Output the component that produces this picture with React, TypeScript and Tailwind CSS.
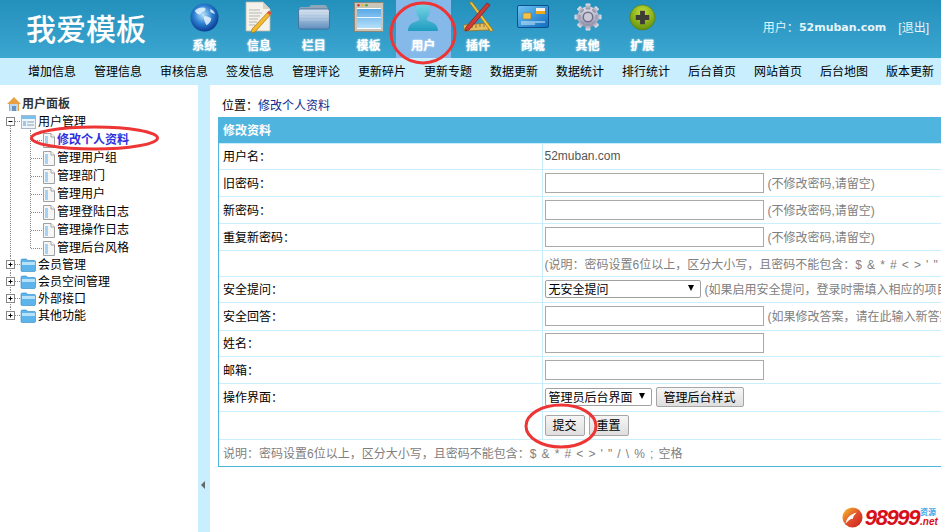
import React from 'react'

const navLinks = ['增加信息', '管理信息', '审核信息', '签发信息', '管理评论', '更新碎片', '更新专题', '数据更新', '数据统计', '排行统计', '后台首页', '网站首页', '后台地图', '版本更新']

function GlobeIcon() {
  return (
    <svg width="29" height="29" viewBox="0 0 30 30">
      <defs>
        <radialGradient id="globe" cx="45%" cy="40%" r="60%">
          <stop offset="0%" stopColor="#b8e2fa" />
          <stop offset="55%" stopColor="#2a7fd0" />
          <stop offset="100%" stopColor="#0b3c94" />
        </radialGradient>
      </defs>
      <circle cx="15" cy="15" r="14.5" fill="url(#globe)" />
      <path d="M5 8c3-3 7-4 10-3 2 1 1 3-1 4-2 0-2 2-4 3-2 0-4-2-5-4zM14 14c3-1 6 0 8 2 0 3-3 6-5 7-1-2-3-6-3-9zM21 6c2 1 4 3 5 5-2 0-4-1-5-2z" fill="#e8f5fd" opacity="0.85" />
    </svg>
  )
}

function NoteIcon() {
  return (
    <svg width="30" height="32" viewBox="0 0 30 32">
      <path d="M2 1h17l7 7v22H2z" fill="#f4f2ea" stroke="#b9b6aa" strokeWidth="0.8" />
      <path d="M19 1v7h7z" fill="#d6d3c6" />
      <path d="M5 9h11M5 12h13M5 15h11M5 18h9M5 21h8M5 24h6" stroke="#b5b5b0" strokeWidth="1" />
      <path d="M25 10l3 2L11 31l-4 1 1-4z" fill="#f2b92c" stroke="#a6701a" strokeWidth="0.7" />
      <path d="M25 10l3 2-2 2-3-2z" fill="#d8504a" />
    </svg>
  )
}

function FolderIcon() {
  return (
    <svg width="32" height="26" viewBox="0 0 32 26">
      <defs>
        <linearGradient id="fold" x1="0" y1="0" x2="0" y2="1">
          <stop offset="0%" stopColor="#d8e4f0" />
          <stop offset="100%" stopColor="#5f8fbe" />
        </linearGradient>
      </defs>
      <path d="M1 5c0-1 1-2 2-2h8l2-2h14c1 0 2 1 2 2l2 3H1z" fill="#8fa6ba" />
      <rect x="0.5" y="5" width="31" height="20" rx="2" fill="url(#fold)" stroke="#3f6a94" strokeWidth="0.8" />
      <path d="M2 10h28M2 13h28M2 16h28" stroke="#ffffff" strokeOpacity="0.25" />
    </svg>
  )
}

function WindowIcon() {
  return (
    <svg width="30" height="30" viewBox="0 0 30 30">
      <defs>
        <linearGradient id="win" x1="0" y1="0" x2="0" y2="1">
          <stop offset="0%" stopColor="#5aa9e6" />
          <stop offset="100%" stopColor="#b4e0fb" />
        </linearGradient>
      </defs>
      <rect x="0.5" y="0.5" width="29" height="29" fill="#c9c5b8" stroke="#8c8778" />
      <rect x="3" y="6" width="24" height="21" fill="#fff" />
      <rect x="3" y="7" width="24" height="19" fill="url(#win)" />
      <rect x="3" y="15" width="24" height="1" fill="#eaf6ff" />
      <circle cx="4.5" cy="3.3" r="1.3" fill="#d8352a" />
      <circle cx="8.5" cy="3.3" r="1.3" fill="#e8b820" />
      <circle cx="12.5" cy="3.3" r="1.3" fill="#4aa838" />
    </svg>
  )
}

function UserIcon() {
  return (
    <svg width="32" height="30" viewBox="0 0 32 30">
      <defs>
        <linearGradient id="usr" x1="0" y1="0" x2="0" y2="1">
          <stop offset="0%" stopColor="#7fd8e8" />
          <stop offset="100%" stopColor="#1f9cc0" />
        </linearGradient>
      </defs>
      <path d="M16 0c5 0 7 4 7 8 0 3-1 6-3 8-1 2 1 3 4 4 4 1 7 4 7 9H1c0-5 3-8 7-9 3-1 5-2 4-4-2-2-3-5-3-8 0-4 2-8 7-8z" fill="url(#usr)" />
    </svg>
  )
}

function ToolsIcon() {
  return (
    <svg width="32" height="32" viewBox="0 0 32 32">
      <path d="M1 24L27 22v7L3 30z" fill="#e2bd62" stroke="#8f6d20" strokeWidth="0.7" />
      <path d="M6 24v3M10 24v3M14 24v3M18 23v3M22 23v3" stroke="#7d5d1a" strokeWidth="0.8" />
      <path d="M7 1l3 0 21 28-2 2z" fill="#f2c53a" stroke="#8f6d20" strokeWidth="0.7" />
      <path d="M25 2l3 2L7 29l-4 1 1-4z" fill="#cf3b34" stroke="#7c1d18" strokeWidth="0.7" />
    </svg>
  )
}

function CardIcon() {
  return (
    <svg width="32" height="24" viewBox="0 0 32 24">
      <defs>
        <linearGradient id="card" x1="0" y1="0" x2="1" y2="1">
          <stop offset="0%" stopColor="#6cc4f2" />
          <stop offset="100%" stopColor="#0f6cc0" />
        </linearGradient>
      </defs>
      <rect x="0.5" y="0.5" width="31" height="22" rx="1.5" fill="url(#card)" stroke="#0b4f90" />
      <rect x="19" y="3" width="9" height="3" fill="#f2f2f2" />
      <rect x="19" y="6" width="9" height="3" fill="#f0a818" />
      <rect x="6" y="8" width="8" height="6" rx="1" fill="#f3c24a" stroke="#b07a12" strokeWidth="0.6" />
      <path d="M4 17h24M4 19h14" stroke="#d6effc" strokeWidth="1" />
    </svg>
  )
}

function GearIcon() {
  return (
    <svg width="28" height="30" viewBox="0 0 28 28">
      <defs>
        <linearGradient id="gear" x1="0" y1="0" x2="0" y2="1">
          <stop offset="0%" stopColor="#e4e4ea" />
          <stop offset="100%" stopColor="#8c8ca8" />
        </linearGradient>
      </defs>
      <g fill="url(#gear)">
        <circle cx="14" cy="14" r="10.5" />
        {[0, 45, 90, 135, 180, 225, 270, 315].map((deg) => (
          <rect key={deg} x="11.5" y="0.5" width="5" height="6" rx="1" transform={`rotate(${deg} 14 14)`} />
        ))}
      </g>
      <circle cx="14" cy="14" r="5.5" fill="#70708c" />
      <circle cx="14" cy="14" r="4" fill="#c9c9d8" />
    </svg>
  )
}

function PlusIcon() {
  return (
    <svg width="27" height="27" viewBox="0 0 28 28">
      <defs>
        <radialGradient id="plus" cx="50%" cy="30%" r="75%">
          <stop offset="0%" stopColor="#c6e23a" />
          <stop offset="100%" stopColor="#5d8a06" />
        </radialGradient>
      </defs>
      <circle cx="14" cy="14" r="13" fill="url(#plus)" stroke="#4f7a08" strokeWidth="0.6" />
      <path d="M11.5 7h5v4.5H21v5h-4.5V21h-5v-4.5H7v-5h4.5z" fill="#3d3d36" />
    </svg>
  )
}

const mainNav = [
  { label: '系统', icon: <GlobeIcon /> },
  { label: '信息', icon: <NoteIcon /> },
  { label: '栏目', icon: <FolderIcon /> },
  { label: '模板', icon: <WindowIcon /> },
  { label: '用户', icon: <UserIcon />, active: true },
  { label: '插件', icon: <ToolsIcon /> },
  { label: '商城', icon: <CardIcon /> },
  { label: '其他', icon: <GearIcon /> },
  { label: '扩展', icon: <PlusIcon /> },
]

function PageGlyph() {
  return (
    <g>
      <path d="M43.500 2.500h7.500l3.500 3.500v10.500h-11z" fill="#f6f6f6" stroke="#a0a0a0" />
      <path d="M51 2.500v3.500h3.500" fill="#fff" stroke="#a0a0a0" />
      <rect x="45" y="5" width="3" height="10" fill="#a4d2f2" />
    </g>
  )
}

function TreeLeaf({ label, last, current }: { label: string; last?: boolean; current?: boolean }) {
  return (
    <div className={`flex items-center ${last ? 'h-[17px]' : 'h-[18px]'}`}>
      <svg width="57" height="18" className="shrink-0">
        <path d="M10.5 0V18" stroke="#888" strokeDasharray="1 1" />
        <path d={last ? 'M30.5 0V9' : 'M30.5 0V18'} stroke="#888" strokeDasharray="1 1" />
        <path d="M31 9.5H43" stroke="#888" strokeDasharray="1 1" />
        <PageGlyph />
      </svg>
      <span className={current ? 'font-bold text-[#3030e0]' : 'text-black'}>{label}</span>
    </div>
  )
}

function TreeFolder({ label, last }: { label: string; last?: boolean }) {
  return (
    <div className="flex h-[17px] items-center">
      <svg width="38" height="17" className="shrink-0">
        <path d={last ? 'M10.5 0V8' : 'M10.5 0V17'} stroke="#888" strokeDasharray="1 1" />
        <path d="M15 8.5H21" stroke="#888" strokeDasharray="1 1" />
        <rect x="6.5" y="4.5" width="8" height="8" fill="#fff" stroke="#888" />
        <path d="M8.5 8.5h4M10.5 6.5v4" stroke="#000" />
        <path d="M21 4.5c0-1 .5-1.500 1.500-1.500h4l1 1.500h7c.5 0 1 .5 1 1v9c0 .5-.5 1-1 1H22c-.5 0-1-.5-1-1z" fill="#5cb4ea" stroke="#2d86c4" strokeWidth="0.6" />
        <rect x="22" y="6" width="13" height="3" fill="#b8e2fa" />
      </svg>
      <span>{label}</span>
    </div>
  )
}

function Sidebar() {
  return (
    <aside className="w-[198px] shrink-0 bg-white pt-[10px] text-[12px] leading-none">
      <div className="flex h-[18px] items-center pl-[6px]">
        <svg width="16" height="16" viewBox="0 0 16 16" className="shrink-0">
          <path d="M1 8l7-7 7 7-2 0v7H3V8z" fill="#e8a040" />
          <rect x="4" y="8" width="8" height="7" fill="#bcd8f0" />
          <rect x="6" y="10" width="4" height="5" fill="#6a94c0" />
        </svg>
        <span className="font-bold text-[#333]">用户面板</span>
      </div>
      <div className="flex h-[18px] items-center">
        <svg width="38" height="18" className="shrink-0">
          <path d="M10.5 13V18" stroke="#888" strokeDasharray="1 1" />
          <path d="M15 8.500H21" stroke="#888" strokeDasharray="1 1" />
          <path d="M30.500 15V18" stroke="#888" strokeDasharray="1 1" />
          <rect x="6.5" y="4.5" width="8" height="8" fill="#fff" stroke="#888" />
          <path d="M8.5 8.5h4" stroke="#000" />
          <rect x="21.500" y="2.500" width="14" height="13" fill="#eef5fb" stroke="#a8b8c8" />
          <rect x="22" y="3" width="13" height="3" fill="#7cc0ee" />
          <path d="M27 9h7M27 12h7" stroke="#8aa0b4" />
          <rect x="23" y="8" width="3" height="5" fill="#9cc8ec" />
        </svg>
        <span>用户管理</span>
      </div>
      <TreeLeaf label="修改个人资料" current />
      <TreeLeaf label="管理用户组" />
      <TreeLeaf label="管理部门" />
      <TreeLeaf label="管理用户" />
      <TreeLeaf label="管理登陆日志" />
      <TreeLeaf label="管理操作日志" />
      <TreeLeaf label="管理后台风格" last />
      <TreeFolder label="会员管理" />
      <TreeFolder label="会员空间管理" />
      <TreeFolder label="外部接口" />
      <TreeFolder label="其他功能" last />
    </aside>
  )
}

function TextInput() {
  return <input type="text" className="h-[20px] w-[219px] shrink-0 border border-[#a9a9a9] bg-white" />
}

function Hint({ children }: { children: React.ReactNode }) {
  return <span className="pt-[2px]">{children}</span>
}

function FakeSelect({ label, width }: { label: string; width: string }) {
  return (
    <div className={`relative flex h-[18px] shrink-0 items-center rounded-[2px] border border-[#a0a0a0] bg-white pl-[3px] pt-[1px] text-[12px] text-black ${width}`}>
      {label}
      <span className="absolute right-[6px] top-[4px] h-0 w-0 border-x-[3.5px] border-t-[6px] border-x-transparent border-t-black" />
    </div>
  )
}

function Btn({ label, className }: { label: string; className: string }) {
  return (
    <button type="button" className={`shrink-0 rounded-[2px] border border-[#a6a6a6] bg-gradient-to-b from-[#f6f6f6] to-[#dedede] pt-[1px] text-[12px] text-black ${className}`}>
      {label}
    </button>
  )
}

function RuleText() {
  return (
    <>
      <span className="tracking-[0.9px]">{"$ & * # < > ' \" / \\ % ; "}</span>空格
    </>
  )
}

function Row({ label, height, children }: { label?: string; height: string; children: React.ReactNode }) {
  return (
    <tr className={height}>
      <td className="border border-l-0 border-[#c9efff] pl-[4px] pt-[2px] text-black">{label}</td>
      <td className="border border-r-0 border-[#c9efff] pl-[2px]">
        <div className="flex items-center gap-[4px] whitespace-nowrap text-[#808080]">{children}</div>
      </td>
    </tr>
  )
}

function FormTable() {
  return (
    <div className="mt-[4px] w-[1000px] border border-[#4fb4de] text-[12px] leading-none">
      <table className="w-full table-fixed border-collapse">
        <colgroup>
          <col className="w-[323px]" />
          <col />
        </colgroup>
        <tbody>
          <tr className="h-[25px]">
            <td colSpan={2} className="bg-[#4fb4de] pl-[4px] pt-[2px] font-bold text-white">修改资料</td>
          </tr>
          <Row label="用户名：" height="h-[26px]"><span className="text-[#555]">52muban.com</span></Row>
          <Row label="旧密码：" height="h-[27px]"><TextInput /><Hint>(不修改密码,请留空)</Hint></Row>
          <Row label="新密码：" height="h-[27px]"><TextInput /><Hint>(不修改密码,请留空)</Hint></Row>
          <Row label="重复新密码：" height="h-[27px]"><TextInput /><Hint>(不修改密码,请留空)</Hint></Row>
          <Row height="h-[26px]">
            <span className="pt-[3px]">(说明：密码设置6位以上，区分大小写，且密码不能包含：<RuleText />)</span>
          </Row>
          <Row label="安全提问：" height="h-[26px]">
            <FakeSelect label="无安全提问" width="w-[156px]" />
            <Hint>(如果启用安全提问，登录时需填入相应的项目才能登录)</Hint>
          </Row>
          <Row label="安全回答：" height="h-[28px]"><TextInput /><Hint>(如果修改答案，请在此输入新答案)</Hint></Row>
          <Row label="姓名：" height="h-[26px]"><TextInput /></Row>
          <Row label="邮箱：" height="h-[27px]"><TextInput /></Row>
          <Row label="操作界面：" height="h-[28px]">
            <FakeSelect label="管理员后台界面" width="w-[107px]" />
            <Btn label="管理后台样式" className="h-[20px] w-[88px]" />
          </Row>
          <Row height="h-[28px]">
            <Btn label="提交" className="mt-[1px] h-[21px] w-[40px]" />
            <Btn label="重置" className="mt-[1px] h-[21px] w-[40px]" />
          </Row>
          <tr className="h-[27px]">
            <td colSpan={2} className="whitespace-nowrap pl-[4px] pt-[3px] text-[#808080]">
              说明：密码设置6位以上，区分大小写，且密码不能包含：<RuleText />
            </td>
          </tr>
        </tbody>
      </table>
    </div>
  )
}

export default function App() {
  return (
    <div className="relative flex h-[532px] w-[941px] flex-col overflow-hidden bg-white font-['Liberation_Sans','Noto_Sans_CJK_SC',sans-serif]">
      <header className="flex h-[58px] shrink-0 bg-gradient-to-b from-[#2390bc] to-[#3ba6d0]">
        <div className="w-[177px] shrink-0 pl-[26px] pt-[12px] text-[30px] font-medium leading-[36px] text-white">我爱模板</div>
        <nav className="flex">
          {mainNav.map((item) => (
            <div
              key={item.label}
              className={`flex w-[54.75px] flex-col items-center text-[12px] font-bold text-white ${item.active ? 'bg-[#85b9e9]' : ''}`}
            >
              <div className="flex h-[34px] items-center justify-center">{item.icon}</div>
              <span className="mt-[5px] leading-[14px] [text-shadow:0_0_2px_#ffffff]">{item.label}</span>
            </div>
          ))}
        </nav>
        <div className="ml-auto flex items-start whitespace-nowrap pr-[12px] pt-[21px] text-[12px] leading-[14px] text-[#e6f4fa]">
          用户：<span className="font-['DejaVu_Sans'] text-[11px] font-bold">52muban.com</span>
          <span className="ml-[12px]">[退出]</span>
        </div>
      </header>

      <div className="flex h-[27px] shrink-0 items-center bg-[#c9efff] pl-[28px] text-[12px] text-black">
        {navLinks.map((link) => (
          <span key={link} className="w-[66px] shrink-0">{link}</span>
        ))}
      </div>

      <div className="flex min-h-0 flex-1">
        <Sidebar />
        <div className="flex w-[12px] shrink-0 items-center justify-center bg-[#c9efff] pt-[352px] pr-[3px]">
          <span className="h-0 w-0 border-y-[4px] border-r-[4px] border-y-transparent border-r-[#666]" />
        </div>
        <main className="min-w-0 flex-1 pl-[8px] pt-[12px] text-[12px]">
          <div className="pl-[4px] pt-[1px] leading-[16px] text-black">
            位置：<span className="text-[#0a2a8c]">修改个人资料</span>
          </div>
          <div className="-mt-[1px]">
            <FormTable />
          </div>
        </main>
      </div>

      {/* hand-drawn red annotations over the page */}
      <svg className="pointer-events-none absolute left-0 top-0" width="941" height="532">
        <g fill="none" stroke="#ee3535" strokeWidth="3">
          <ellipse cx="423" cy="33" rx="32" ry="30" />
          <ellipse cx="94.500" cy="138" rx="63" ry="11" />
          <ellipse cx="561" cy="426" rx="35" ry="21" />
        </g>
      </svg>

      {/* watermark logo */}
      <div className="absolute bottom-[3px] right-[4px] flex items-center bg-white">
        <svg width="21" height="23" viewBox="0 0 23 23" className="shrink-0">
          <defs>
            <linearGradient id="wm" x1="0" y1="0" x2="1" y2="1">
              <stop offset="0%" stopColor="#f6c428" />
              <stop offset="55%" stopColor="#e04a2a" />
              <stop offset="100%" stopColor="#c8201c" />
            </linearGradient>
          </defs>
          <circle cx="11.500" cy="11.500" r="11" fill="url(#wm)" />
          <path d="M4 18c1-6 5-10 12-12-3 3-4 5-4 7-3 0-5 2-8 5z" fill="#fff" />
        </svg>
        <span className="ml-[2px] font-['Liberation_Sans'] text-[22px] font-bold italic leading-none tracking-[-1.4px] text-[#d8101a]">98999</span>
        <div className="ml-[1px] flex w-[17px] flex-col leading-none">
          <span className="text-[8px] font-bold text-[#3aa8e8]">资源</span>
          <span className="font-['Liberation_Sans'] text-[10px] font-bold italic text-[#d8101a]">.net</span>
        </div>
      </div>
    </div>
  )
}
